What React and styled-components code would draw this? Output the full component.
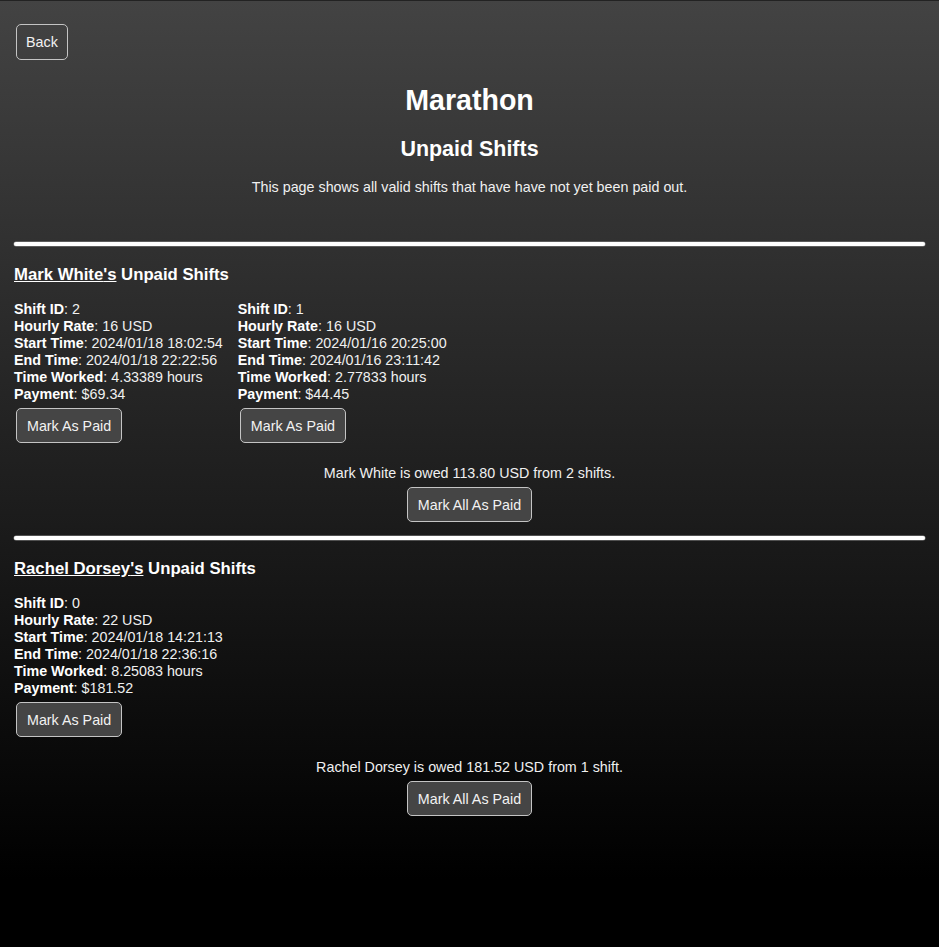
import React from "react"
import styled, { createGlobalStyle } from "styled-components"

const employees = [
  {
    name: "Mark White",
    owed: "113.80",
    shifts: [
      { id: 2, rate: 16, start: "2024/01/18 18:02:54", end: "2024/01/18 22:22:56", worked: "4.33389", pay: "69.34" },
      { id: 1, rate: 16, start: "2024/01/16 20:25:00", end: "2024/01/16 23:11:42", worked: "2.77833", pay: "44.45" },
    ],
  },
  {
    name: "Rachel Dorsey",
    owed: "181.52",
    shifts: [
      { id: 0, rate: 22, start: "2024/01/18 14:21:13", end: "2024/01/18 22:36:16", worked: "8.25083", pay: "181.52" },
    ],
  },
]

const GlobalStyle = createGlobalStyle`
  html {
    background: #000;
  }
  body {
    margin: 0;
    min-height: 947px;
    font-family: "Liberation Sans", Arial, sans-serif;
    font-size: 14.3px;
    color: #f0f0f0;
    background-color: #000;
    background-image: linear-gradient(180deg, #434343 0px, #000 880px);
    background-size: 100% 880px;
    background-repeat: no-repeat;
  }
`

const Page = styled.div`
  border-top: 1px solid #222;
  padding: 0 14px 40px;
`

const TopBar = styled.div`
  padding-top: 23px;
  display: flex;
`

const Button = styled.button`
  margin: 0 2px;
  height: ${props => (props.back ? "36px" : "35px")};
  padding: 0 ${props => (props.back ? "9px" : "10px")};
  font-family: "Liberation Sans", Arial, sans-serif;
  font-size: 14.3px;
  line-height: 16px;
  color: #f2f2f2;
  background: ${props => (props.back ? "transparent" : "#454545")};
  border: 1px solid #c4c4c4;
  border-radius: 5px;
  cursor: pointer;
`

const Title = styled.h1`
  margin: 24px 0 0;
  font-size: 2em;
  line-height: 32px;
  text-align: center;
  color: #fff;
`

const Subtitle = styled.h2`
  margin: 21px 0 0;
  font-size: 1.5em;
  line-height: 24px;
  text-align: center;
  color: #fff;
`

const Description = styled.p`
  margin: 18px 0 0;
  line-height: 17px;
  text-align: center;
`

const Rule = styled.hr`
  margin: ${props => props.top}px 0 0;
  height: 4px;
  border: none;
  border-radius: 2px;
  background: #fff;
  box-shadow: 0 0 0 0.5px #888;
`

const SectionHeading = styled.h3`
  margin: 19px 0 0;
  font-size: 1.17em;
  line-height: 20px;
  color: #fff;
`

const NameLink = styled.a`
  color: #fff;
  text-decoration: underline;
`

const ShiftRow = styled.div`
  margin-top: 16px;
  display: flex;
  gap: 15px;
`

const ShiftCard = styled.div`
  display: flex;
  flex-direction: column;
  align-items: flex-start;
`

const Line = styled.div`
  line-height: 17px;
  white-space: nowrap;

  strong {
    font-weight: bold;
    color: #fff;
  }
`

const CardActions = styled.div`
  margin-top: 5px;
`

const Summary = styled.div`
  margin-top: 22px;
  display: flex;
  flex-direction: column;
  align-items: center;
  gap: 5px;
  line-height: 17px;
`

const Shift = ({ shift }) => (
  <ShiftCard>
    <Line><strong>Shift ID</strong>: {shift.id}</Line>
    <Line><strong>Hourly Rate</strong>: {shift.rate} USD</Line>
    <Line><strong>Start Time</strong>: {shift.start}</Line>
    <Line><strong>End Time</strong>: {shift.end}</Line>
    <Line><strong>Time Worked</strong>: {shift.worked} hours</Line>
    <Line><strong>Payment</strong>: ${shift.pay}</Line>
    <CardActions>
      <Button>Mark As Paid</Button>
    </CardActions>
  </ShiftCard>
)

const EmployeeSection = ({ employee, last }) => (
  <section>
    <SectionHeading>
      <NameLink href="#">{employee.name}'s</NameLink> Unpaid Shifts
    </SectionHeading>
    <ShiftRow>
      {employee.shifts.map(shift => (
        <Shift key={shift.id} shift={shift} />
      ))}
    </ShiftRow>
    <Summary>
      <span>
        {employee.name} is owed {employee.owed} USD from {employee.shifts.length}{" "}
        {employee.shifts.length === 1 ? "shift" : "shifts"}.
      </span>
      <Button>Mark All As Paid</Button>
    </Summary>
    {!last && <Rule top={14} />}
  </section>
)

const App = () => (
  <>
    <GlobalStyle />
    <Page>
      <TopBar>
        <Button back>Back</Button>
      </TopBar>
      <Title>Marathon</Title>
      <Subtitle>Unpaid Shifts</Subtitle>
      <Description>
        This page shows all valid shifts that have have not yet been paid out.
      </Description>
      <Rule top={46} />
      {employees.map((employee, index) => (
        <EmployeeSection
          key={employee.name}
          employee={employee}
          last={index === employees.length - 1}
        />
      ))}
    </Page>
  </>
)

export default App
